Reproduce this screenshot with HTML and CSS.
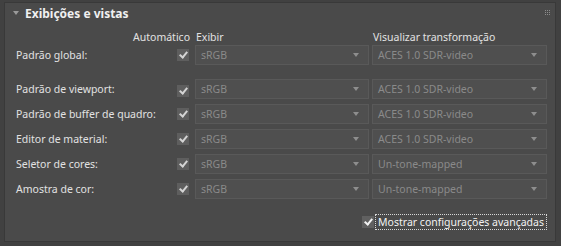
FILE: index.html
```html
<!DOCTYPE html>
<html lang="pt">
<head>
  <meta charset="UTF-8">
  <title>Exibições e vistas</title>
  <link rel="stylesheet" href="styles.css">
</head>
<body>

  <div class="rollout">
    <div class="rollout-title">
      <span class="caret"></span>
      <span class="title-text">Exibições e vistas</span>
      <svg class="grip" width="5" height="5" viewBox="0 0 5 5">
        <rect x="0" y="0" width="1" height="1"/><rect x="2" y="0" width="1" height="1"/><rect x="4" y="0" width="1" height="1"/>
        <rect x="0" y="2" width="1" height="1"/><rect x="2" y="2" width="1" height="1"/><rect x="4" y="2" width="1" height="1"/>
        <rect x="0" y="4" width="1" height="1"/><rect x="2" y="4" width="1" height="1"/><rect x="4" y="4" width="1" height="1"/>
      </svg>
    </div>

    <div class="grid">
      <div class="col-head auto">Automático</div>
      <div class="col-head">Exibir</div>
      <div class="col-head">Visualizar transformação</div>

      <div class="label">Padrão global:</div>
      <div class="check checked"></div>
      <div class="dropdown">sRGB</div>
      <div class="dropdown">ACES 1.0 SDR-video</div>

      <div class="label sep">Padrão de viewport:</div>
      <div class="check checked sep"></div>
      <div class="dropdown sep">sRGB</div>
      <div class="dropdown sep">ACES 1.0 SDR-video</div>

      <div class="label">Padrão de buffer de quadro:</div>
      <div class="check checked"></div>
      <div class="dropdown">sRGB</div>
      <div class="dropdown">ACES 1.0 SDR-video</div>

      <div class="label">Editor de material:</div>
      <div class="check checked"></div>
      <div class="dropdown">sRGB</div>
      <div class="dropdown">ACES 1.0 SDR-video</div>

      <div class="label">Seletor de cores:</div>
      <div class="check checked"></div>
      <div class="dropdown">sRGB</div>
      <div class="dropdown">Un-tone-mapped</div>

      <div class="label">Amostra de cor:</div>
      <div class="check checked"></div>
      <div class="dropdown">sRGB</div>
      <div class="dropdown">Un-tone-mapped</div>
    </div>

    <div class="advanced">
      <div class="check checked"></div>
      <span class="focus-label">Mostrar configurações avançadas</span>
    </div>
  </div>

</body>
</html>
```

FILE: styles.css
```css
body {
  margin: 0;
  background-color: #414141;
  font-family: "Noto Sans", "Open Sans", sans-serif;
  font-size: 10.5px;
  color: #e2e2e2;
}
.rollout {
  margin: 2px 0 0 4px;
  width: 552px;
  height: 240px;
  background: #4a4a4a;
  border: 1px solid #393939;
  padding: 0 8px 0 11px;
  box-sizing: border-box;
}
.rollout-title {
  display: flex;
  align-items: center;
  height: 20px;
  margin-left: -3px;
}
.caret {
  width: 0;
  height: 0;
  border-left: 3px solid transparent;
  border-right: 3px solid transparent;
  border-top: 4px solid #9a9a9a;
  margin-right: 6px;
}
.title-text {
  font-weight: bold;
  font-size: 12px;
  color: #f0f0f0;
  flex: 1;
}
.grip {
  fill: #8c8c8c;
  margin-right: -3px;
  margin-top: -2px;
}
.grid {
  display: grid;
  grid-template-columns: 161px 18px 177px 175px;
  row-gap: 5px;
  margin-top: 6px;
}
.col-head {
  height: 16px;
  line-height: 16px;
  padding-left: 1px;
  margin-bottom: -5px;
  white-space: nowrap;
}
.col-head.auto {
  grid-column: 1 / 3;
  text-align: right;
  padding-right: 5px;
}
.sep {
  margin-top: 9px;
}
.label {
  height: 20px;
  line-height: 21px;
  white-space: nowrap;
}
.check {
  width: 12px;
  height: 12px;
  background: #5e5e5e;
  align-self: center;
  position: relative;
}
.check.sep {
  margin-top: 13px;
}
.check.checked::after {
  content: "";
  position: absolute;
  left: 4px;
  top: 1px;
  width: 3px;
  height: 6px;
  border-right: 2px solid #d4d4d4;
  border-bottom: 2px solid #d4d4d4;
  transform: rotate(40deg);
}
.dropdown {
  width: 174px;
  height: 20px;
  background: #4f4f4f;
  border: 1px solid #595959;
  box-sizing: border-box;
  color: #8a8a8a;
  line-height: 18px;
  padding-left: 5px;
  position: relative;
}
.dropdown::after {
  content: "";
  position: absolute;
  right: 9px;
  top: 7px;
  border-left: 3px solid transparent;
  border-right: 3px solid transparent;
  border-top: 4px solid #8e8e8e;
}
.grid > .dropdown:nth-child(4n+3) {
  width: 175px;
}
.advanced {
  display: flex;
  align-items: center;
  justify-content: flex-end;
  margin-top: 15px;
}
.advanced .check {
  margin-right: 1px;
  background: #606060;
}
.advanced .check.checked::after {
  border-color: #f2f2f2;
}
.focus-label {
  border: 1px dotted #d8d8d8;
  padding: 0 2px;
  height: 14px;
  line-height: 14px;
  color: #f2f2f2;
}
```
